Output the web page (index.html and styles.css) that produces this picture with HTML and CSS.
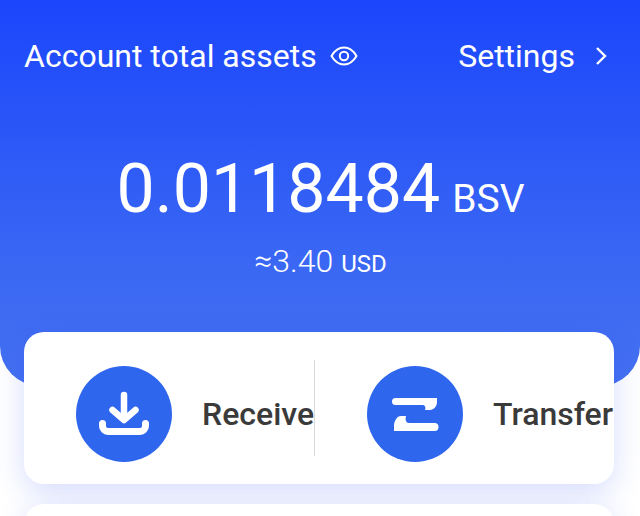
FILE: index.html
```html
<!DOCTYPE html>
<html lang="en">
<head>
  <meta charset="UTF-8">
  <title>Wallet</title>
  <link rel="stylesheet" href="styles.css">
</head>
<body>
  <div class="page">
    <div class="hero">
      <div class="top-row">
        <div class="top-item">
          <span>Account total assets</span>
          <svg class="eye" viewBox="0 0 28 20" width="28" height="20">
            <path d="M1.500 10C5 4 9 1.500 14 1.500S23 4 26.500 10C23 16 19 18.500 14 18.500S5 16 1.500 10z" fill="none" stroke="#fff" stroke-width="2" stroke-linejoin="round"/>
            <circle cx="14" cy="10" r="4.200" fill="none" stroke="#fff" stroke-width="2"/>
          </svg>
        </div>
        <div class="top-item">
          <span>Settings</span>
          <svg class="chevron" viewBox="0 0 12 20" width="12" height="20">
            <path d="M2 2l8 8-8 8" fill="none" stroke="#fff" stroke-width="2.400"/>
          </svg>
        </div>
      </div>
      <div class="balance"><span class="amount">0.0118484</span><span class="coin">BSV</span></div>
      <div class="fiat"><span class="fiat-value">≈3.40</span><span class="fiat-unit">USD</span></div>
    </div>

    <div class="card actions">
      <div class="action">
        <div class="circle">
          <svg viewBox="0 0 60 60" width="60" height="60">
            <path d="M30 11v24" stroke="#fff" stroke-width="6.500" stroke-linecap="round"/>
            <path d="M18.500 26L30 36l11.500-10" fill="none" stroke="#fff" stroke-width="6.500" stroke-linecap="round" stroke-linejoin="round"/>
            <path d="M8.500 39.500V42a5.500 5.500 0 0 0 5.500 5.500h32a5.500 5.500 0 0 0 5.500-5.500v-2.500" fill="none" stroke="#fff" stroke-width="7" stroke-linecap="round" stroke-linejoin="round"/>
          </svg>
        </div>
        <span class="label">Receive</span>
      </div>
      <div class="action with-line">
        <div class="circle">
          <svg viewBox="0 0 48 48" width="48" height="48">
            <path d="M4.500 8H46v4c0 4-3 8-7 8h-5c1-3 0-5-3-5H4.500a3.500 3.500 0 0 1 0-7z" fill="#fff"/>
            <path d="M43.500 41H3v-5c0-5 3-10 7-10h5c-1 4 0 7 3 7h25.500a4 4 0 0 1 0 8z" fill="#fff"/>
          </svg>
        </div>
        <span class="label">Transfer</span>
      </div>
    </div>

    <div class="card next-card"></div>
  </div>
</body>
</html>
```

FILE: styles.css
```css
body {
  margin: 0;
  background: #fff;
  font-family: Roboto, "Liberation Sans", sans-serif;
}

.page {
  height: 100vh;
  overflow: hidden;
}

.hero {
  height: 386px;
  box-sizing: border-box;
  padding: 36px 33px 0 24px;
  background: linear-gradient(180deg, #1b46fc 0%, #3b68f3 70%, #4470f0 100%);
  border-radius: 0 0 40px 40px;
  color: #fff;
}

.top-row {
  display: flex;
  justify-content: space-between;
  align-items: center;
  height: 40px;
  font-size: 32px;
}

.top-item {
  display: flex;
  align-items: center;
}

.eye {
  margin-left: 13px;
}

.chevron {
  margin-left: 20px;
}

.balance {
  display: flex;
  justify-content: center;
  align-items: baseline;
  margin: 67px 0 0 10px;
}

.amount {
  font-size: 68px;
  line-height: 92px;
}

.coin {
  margin-left: 12px;
  font-size: 39px;
}

.fiat {
  display: flex;
  justify-content: center;
  align-items: baseline;
  margin: 7px 0 0 10px;
}

.fiat-value {
  font-size: 32px;
  font-weight: 300;
}

.fiat-unit {
  margin-left: 8px;
  font-size: 24px;
}

.card {
  width: 590px;
  margin-left: 24px;
  background: #fff;
  border-radius: 20px;
  box-shadow: 0 8px 30px rgba(50, 80, 240, 0.2);
}

.actions {
  position: relative;
  display: flex;
  height: 152px;
  margin-top: -54px;
}

.action {
  display: flex;
  align-items: center;
  box-sizing: border-box;
  width: 291px;
  padding: 12px 0 0 52px;
  flex: none;
  white-space: nowrap;
}

.with-line {
  position: relative;
}

.with-line::before {
  content: "";
  position: absolute;
  left: -1px;
  top: 28px;
  width: 1px;
  height: 96px;
  background: #d9d9d9;
}

.circle {
  display: flex;
  justify-content: center;
  align-items: center;
  flex: none;
  width: 96px;
  height: 96px;
  border-radius: 50%;
  background: #2f66ee;
}

.label {
  margin-left: 30px;
  font-size: 32px;
  font-weight: 500;
  color: #3a3a3a;
}

.next-card {
  position: relative;
  height: 80px;
  margin-top: 20px;
}
```
